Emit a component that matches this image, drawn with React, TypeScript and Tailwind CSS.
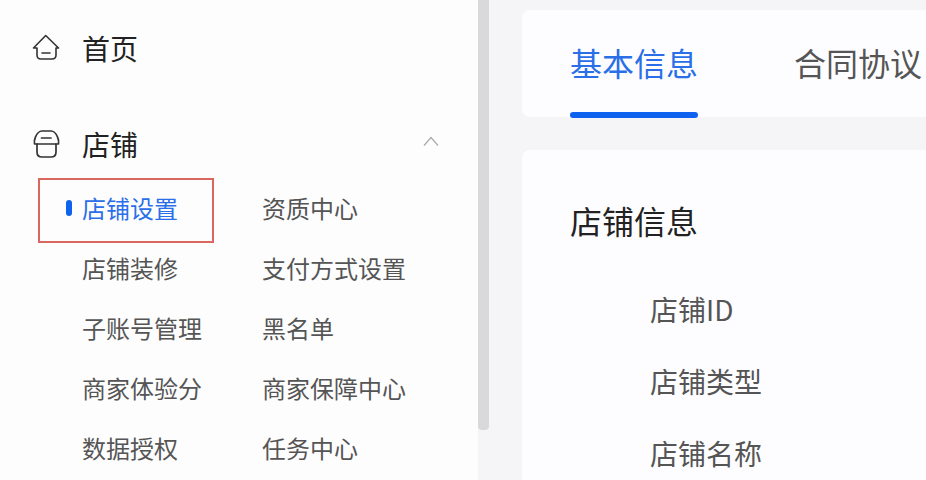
const font = { fontFamily: '"Noto Sans CJK SC", sans-serif' };

const subItems = [
  '店铺设置', '资质中心',
  '店铺装修', '支付方式设置',
  '子账号管理', '黑名单',
  '商家体验分', '商家保障中心',
  '数据授权', '任务中心',
];

const fields = ['店铺ID', '店铺类型', '店铺名称'];

function HomeIcon() {
  return (
    <svg width="28" height="28" viewBox="0 0 28 28" fill="none" stroke="#333" strokeWidth="1.6" strokeLinecap="round" strokeLinejoin="round">
      <path d="M1.5 14 L13.7 1.5 L26.5 14 H24 V21 Q24 25 20 25 H9 Q5 25 5 21 V14 Z" />
      <path d="M10 19 H18" />
    </svg>
  );
}

function ShopIcon() {
  return (
    <svg width="28" height="28" viewBox="0 0 28 28" fill="none" stroke="#333" strokeWidth="1.7" strokeLinecap="round" strokeLinejoin="round">
      <path d="M2.5 14 Q2 10 3.5 7 Q6 1 10 1 H19 Q23 1 25.5 7 Q27 10 26.5 14 Z" />
      <path d="M9.5 8 H19" />
      <path d="M5 14 V22 Q5 27 10 27 H19 Q24 27 24 22 V14" />
    </svg>
  );
}

export default function App() {
  return (
    <div className="flex h-[480px] w-[926px] overflow-hidden bg-[#f5f5f8]" style={font}>
      <aside className="relative w-[478px] shrink-0 bg-[#fdfdfe] pl-[32px]">
        <div className="mt-[31px] flex h-[34px] items-center">
          <HomeIcon />
          <span className="ml-[22px] text-[28px] leading-[34px] text-[#222]">首页</span>
        </div>
        <div className="mt-[62px] flex h-[34px] items-center">
          <ShopIcon />
          <span className="ml-[22px] text-[28px] leading-[34px] text-[#222]">店铺</span>
          <svg className="ml-auto mb-[6px] mr-[39px]" width="16" height="10" viewBox="0 0 16 10" fill="none" stroke="#aaa" strokeWidth="1.2">
            <path d="M1 9.5 L8 1.5 L15 9.5" />
          </svg>
        </div>
        <div className="mt-[17px] grid grid-cols-[180px_1fr] pl-[50px]">
          {subItems.map((label) => (
            <div
              key={label}
              className={
                label === '店铺设置'
                  ? 'flex h-[60px] items-center text-[24px] text-[#2a6fe8]'
                  : 'flex h-[60px] items-center text-[24px] text-[#555]'
              }
            >
              {label}
            </div>
          ))}
        </div>
        {/* active marker and the red annotation box */}
        <div className="absolute left-[66px] top-[200px] h-[16px] w-[6px] rounded-sm bg-[#0f62f0]" />
        <div className="absolute left-[38px] top-[178px] h-[65px] w-[176px] border-2 border-[#d9675f]" />
      </aside>

      {/* scrollbar */}
      <div className="h-[430px] w-[11px] shrink-0 rounded-b-sm bg-[#d9d9db]" />

      <main className="ml-[33px] flex flex-1 flex-col">
        <div className="mt-[10px] flex h-[107px] rounded-l-lg bg-[#fdfdff] pl-[48px]">
          <div className="relative h-[108px] w-[128px]">
            <div className="pt-[28px] text-[32px] leading-[48px] text-[#2a6fe8]">基本信息</div>
            <div className="absolute bottom-0 left-0 h-[6px] w-[128px] rounded-sm bg-[#0f62f0]" />
          </div>
          <div className="ml-[96px] whitespace-nowrap pt-[28px] text-[32px] leading-[48px] text-[#555]">合同协议</div>
        </div>
        <div className="mt-[33px] flex-1 rounded-tl-lg bg-[#fdfdff] pl-[48px] pt-[46px]">
          <div className="text-[32px] leading-[48px] text-[#222]">店铺信息</div>
          <div className="mt-[47px] flex flex-col gap-[36px] pl-[80px]">
            {fields.map((f) => (
              <div key={f} className="h-[36px] text-[28px] leading-[36px] text-[#555]">{f}</div>
            ))}
          </div>
        </div>
      </main>
    </div>
  );
}
